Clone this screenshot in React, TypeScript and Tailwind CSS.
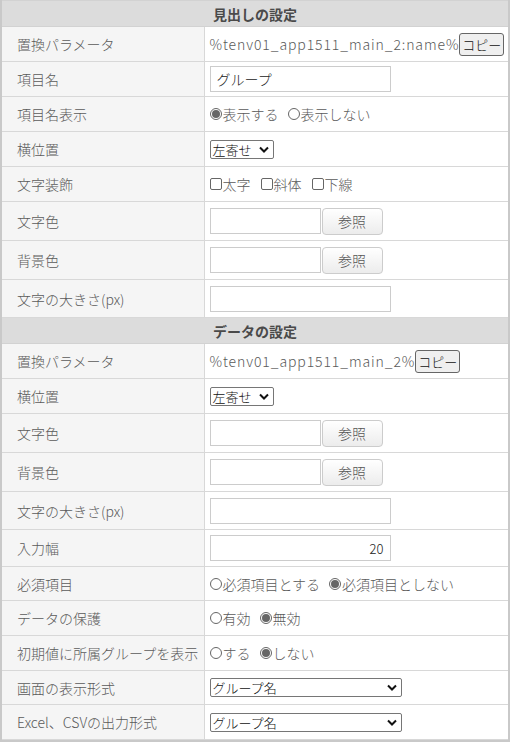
import React from 'react';

const font = { fontFamily: '"Noto Sans CJK JP", "Noto Sans", sans-serif' };

function Radio({ on, label }: { on?: boolean; label: string }) {
  return (
    <span className="inline-flex items-center mr-[9px]">
      <span className="w-[12px] h-[12px] rounded-full border border-[#666] bg-white flex items-center justify-center mr-[1px]">
        {on && <span className="w-[8px] h-[8px] rounded-full bg-[#666]"></span>}
      </span>
      {label}
    </span>
  );
}

function Check({ label }: { label: string }) {
  return (
    <span className="inline-flex items-center mr-[10px]">
      <span className="w-[12px] h-[12px] rounded-[2px] border border-[#666] bg-white mr-[1px]"></span>
      {label}
    </span>
  );
}

function Select({ value, wide }: { value: string; wide?: boolean }) {
  return (
    <div className={`inline-flex items-center justify-between h-[19px] border border-[#767676] rounded-[2px] bg-white text-[#111] text-[13px] pl-[2px] pr-[4px] ${wide ? 'w-[192px]' : 'w-[64px]'}`}>
      <span className="leading-none">{value}</span>
      <svg width="10" height="7" viewBox="0 0 10 7">
        <path d="M1 1.5 L5 5.5 L9 1.5" stroke="#111" strokeWidth="2" fill="none" />
      </svg>
    </div>
  );
}

function TextBox({ w, value }: { w: string; value?: string }) {
  return (
    <div className={`h-[26px] border border-[#ccc] bg-white flex items-center justify-end pr-[6px] text-[13px] text-[#222] ${w}`}>
      {value}
    </div>
  );
}

function ColorPick() {
  return (
    <div className="flex items-center">
      <TextBox w="w-[111px]" />
      <div className="ml-[1px] w-[61px] h-[27px] rounded-[4px] border border-[#ccc] bg-gradient-to-b from-white to-[#ececec] flex items-center justify-center text-[14px] text-[#555]">
        参照
      </div>
    </div>
  );
}

function Copy() {
  return (
    <span className="inline-flex items-center justify-center h-[23px] px-[2px] border border-[#666] rounded-[3px] bg-[#efefef] text-[#111] text-[13px] tracking-normal">
      コピー
    </span>
  );
}

type Row = { label: string; h: number; content: React.ReactNode } | { header: string };

const rows: Row[] = [
  { header: '見出しの設定' },
  { label: '置換パラメータ', h: 35, content: <span className="flex items-center tracking-[0.9px]">%tenv01_app1511_main_2:name%<Copy /></span> },
  { label: '項目名', h: 35, content: <div className="h-[26px] w-[181px] border border-[#ccc] bg-white flex items-center pl-[6px] text-[14px] text-[#222]">グループ</div> },
  { label: '項目名表示', h: 35, content: <span className="flex items-center"><Radio on label="表示する" /><Radio label="表示しない" /></span> },
  { label: '横位置', h: 35, content: <Select value="左寄せ" /> },
  { label: '文字装飾', h: 35, content: <span className="flex items-center"><Check label="太字" /><Check label="斜体" /><Check label="下線" /></span> },
  { label: '文字色', h: 39, content: <ColorPick /> },
  { label: '背景色', h: 39, content: <ColorPick /> },
  { label: '文字の大きさ(px)', h: 38, content: <TextBox w="w-[181px]" /> },
  { header: 'データの設定' },
  { label: '置換パラメータ', h: 35, content: <span className="flex items-center tracking-[0.9px]">%tenv01_app1511_main_2%<Copy /></span> },
  { label: '横位置', h: 35, content: <Select value="左寄せ" /> },
  { label: '文字色', h: 39, content: <ColorPick /> },
  { label: '背景色', h: 39, content: <ColorPick /> },
  { label: '文字の大きさ(px)', h: 38, content: <TextBox w="w-[181px]" /> },
  { label: '入力幅', h: 37, content: <TextBox w="w-[181px]" value="20" /> },
  { label: '必須項目', h: 34, content: <span className="flex items-center"><Radio label="必須項目とする" /><Radio on label="必須項目としない" /></span> },
  { label: 'データの保護', h: 35, content: <span className="flex items-center"><Radio label="有効" /><Radio on label="無効" /></span> },
  { label: '初期値に所属グループを表示', h: 35, content: <span className="flex items-center"><Radio label="する" /><Radio on label="しない" /></span> },
  { label: '画面の表示形式', h: 34, content: <Select wide value="グループ名" /> },
  { label: 'Excel、CSVの出力形式', h: 35, content: <Select wide value="グループ名" /> },
];

export default function App() {
  return (
    <div className="bg-white w-[511px] h-[746px]" style={font}>
      <div className="w-[510px] border-2 border-[#c9c9c9] border-t-0">
        <table className="w-full border-collapse text-[14px] text-[#5a5a5a] font-light">
          <tbody>
            {rows.map((r, i) =>
              'header' in r ? (
                <tr key={i} className="h-[26px] bg-[#dcdcdc]">
                  <td colSpan={2} className="text-center font-bold text-[#4a4a4a] border border-[#d2d2d2] border-x-0 leading-none pt-[1px]">
                    {r.header}
                  </td>
                </tr>
              ) : (
                <tr key={i} style={{ height: r.h }}>
                  <td className="w-[202px] bg-[#f5f5f5] border border-[#d8d8d8] border-l-0 pl-[15px] whitespace-nowrap leading-none">
                    {r.label}
                  </td>
                  <td className="bg-white border border-[#d8d8d8] border-r-0 pl-[5px] whitespace-nowrap leading-none">
                    {r.content}
                  </td>
                </tr>
              )
            )}
          </tbody>
        </table>
      </div>
    </div>
  );
}
